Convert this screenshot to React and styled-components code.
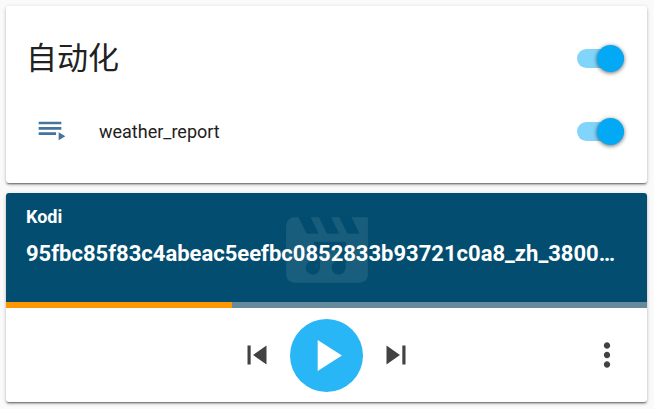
import React, { useState } from "react";
import styled, { createGlobalStyle } from "styled-components";

const GlobalStyle = createGlobalStyle`
  * { box-sizing: border-box; }
  body {
    margin: 0;
    background: #fafafa;
    color: #212121;
    font-family: Roboto, "Noto Sans CJK SC", sans-serif;
    -webkit-font-smoothing: antialiased;
  }
`;

const Page = styled.main`
  display: flex;
  flex-direction: column;
  gap: 10px;
  padding: 6px 7px 6px 6px;
`;

const Card = styled.section`
  overflow: hidden;
  border-radius: 3px;
  background: #fff;
  box-shadow: 0 2px 2px rgba(0, 0, 0, 0.22), 0 1px 4px rgba(0, 0, 0, 0.16),
    0 2px 1px -1px rgba(0, 0, 0, 0.3);
`;

const CardHeader = styled.header`
  display: flex;
  align-items: center;
  justify-content: space-between;
  height: 104px;
  padding: 0 23px 0 20px;
`;

const CardTitle = styled.h1`
  margin: 0;
  padding-top: 2px;
  font-size: 31px;
  font-weight: 400;
  line-height: 42px;
`;

const EntityRow = styled.div`
  display: flex;
  align-items: center;
  height: 42px;
  margin-bottom: 31px;
  padding: 0 23px 0 30px;
`;

const EntityIcon = styled.svg`
  width: 32px;
  height: 32px;
  margin-right: 31px;
  fill: #44739e;
`;

const EntityName = styled.label`
  flex: 1;
  padding-top: 2px;
  font-size: 18px;
  line-height: 26px;
`;

const Switch = styled.input`
  appearance: none;
  display: flex;
  align-items: center;
  width: 47px;
  height: 19px;
  margin: 0;
  border-radius: 10px;
  background: ${(p) => (p.checked ? "#81d4fa" : "#bdbdbd")};
  cursor: pointer;

  &::before {
    content: "";
    flex: none;
    width: 27px;
    height: 27px;
    margin-left: ${(p) => (p.checked ? "20px" : "0")};
    border-radius: 50%;
    background: ${(p) => (p.checked ? "#03a9f4" : "#fafafa")};
    box-shadow: 0 1px 4px rgba(0, 0, 0, 0.6);
  }
`;

const Banner = styled.div`
  position: relative;
  height: 109px;
  padding: 11px 27px 0 20px;
  background: #034e70;
  color: #fff;
  font-weight: 700;
`;

const BannerArt = styled.svg`
  position: absolute;
  inset: 8px 0 auto;
  width: 98px;
  height: 98px;
  margin: 0 auto;
  fill: #fff;
  opacity: 0.09;
`;

const PlayerName = styled.div`
  position: relative;
  font-size: 18px;
  line-height: 26px;
`;

const TrackTitle = styled.div`
  position: relative;
  overflow: hidden;
  margin-top: 8px;
  font-size: 22px;
  line-height: 32px;
  text-overflow: ellipsis;
  white-space: nowrap;
`;

const Progress = styled.div`
  height: 6px;
  background: #668a9c;
`;

const ProgressFill = styled.div`
  height: 100%;
  background: #ff9800;
`;

const Controls = styled.div`
  display: grid;
  grid-template-columns: 1fr auto 1fr;
  align-items: center;
  height: 94px;
  padding: 0 21px 0 20px;
`;

const Playback = styled.div`
  grid-column: 2;
  display: flex;
  align-items: center;
  gap: 14px;
`;

const IconButton = styled.button`
  display: grid;
  place-items: center;
  width: 38px;
  height: 38px;
  padding: 0;
  border: 0;
  background: none;
  color: #424242;
  cursor: pointer;

  svg {
    width: 38px;
    height: 38px;
    fill: currentColor;
  }
`;

const PlayButton = styled(IconButton)`
  width: 73px;
  height: 73px;
  border-radius: 50%;
  background: #29b6f6;
  color: #fff;

  svg {
    width: 53px;
    height: 53px;
  }
`;

const MenuButton = styled(IconButton)`
  justify-self: end;
`;

const Icon = ({ path }) => (
  <svg viewBox="0 0 24 24" aria-hidden="true">
    <path d={path} />
  </svg>
);

function Toggle({ id, label }) {
  const [on, setOn] = useState(true);
  return (
    <Switch
      id={id}
      type="checkbox"
      role="switch"
      aria-label={label}
      checked={on}
      onChange={(e) => setOn(e.target.checked)}
    />
  );
}

export default function App() {
  return (
    <>
      <GlobalStyle />
      <Page>
        <Card>
          <CardHeader>
            <CardTitle lang="zh-CN">自动化</CardTitle>
            <Toggle id="all" label="自动化" />
          </CardHeader>
          <EntityRow>
            <EntityIcon viewBox="0 0 24 24" aria-hidden="true">
              <path d="M19 9H2v2h17V9zm0-4H2v2h17V5zM2 15h13v-2H2v2zm15-2v6l5-3-5-3z" />
            </EntityIcon>
            <EntityName htmlFor="weather">weather_report</EntityName>
            <Toggle id="weather" />
          </EntityRow>
        </Card>
        <Card>
          <Banner>
            <BannerArt viewBox="0 0 24 24" aria-hidden="true">
              <path
                fillRule="evenodd"
                d="M18 4l2 4h-3l-2-4h-2l2 4h-3l-2-4H8l2 4H7L5 4H4a2 2 0 0 0-2 2v12a2 2 0 0 0 2 2h16a2 2 0 0 0 2-2V4zM8.800 10H16.600V16.300A1.750 1.750 0 1 1 15.100 14.570V12H10.300V16.300A1.750 1.750 0 1 1 8.800 14.570z"
              />
            </BannerArt>
            <PlayerName>Kodi</PlayerName>
            <TrackTitle>
              95fbc85f83c4abeac5eefbc0852833b93721c0a8_zh_3800000000
            </TrackTitle>
          </Banner>
          <Progress role="progressbar" aria-valuenow={35} aria-label="Kodi">
            <ProgressFill style={{ width: "35.3%" }} />
          </Progress>
          <Controls>
            <Playback>
              <IconButton aria-label="Previous">
                <Icon path="M6 6h2v12H6zm3.500 6l8.500 6V6z" />
              </IconButton>
              <PlayButton aria-label="Play">
                <Icon path="M8 5v14l11-7z" />
              </PlayButton>
              <IconButton aria-label="Next">
                <Icon path="M6 18l8.500-6L6 6v12zM16 6v12h2V6h-2z" />
              </IconButton>
            </Playback>
            <MenuButton aria-label="More">
              <Icon path="M12 8c1.100 0 2-.9 2-2s-.9-2-2-2-2 .9-2 2 .9 2 2 2zm0 2c-1.100 0-2 .9-2 2s.9 2 2 2 2-.9 2-2-.9-2-2-2zm0 6c-1.100 0-2 .9-2 2s.9 2 2 2 2-.9 2-2-.9-2-2-2z" />
            </MenuButton>
          </Controls>
        </Card>
      </Page>
    </>
  );
}
